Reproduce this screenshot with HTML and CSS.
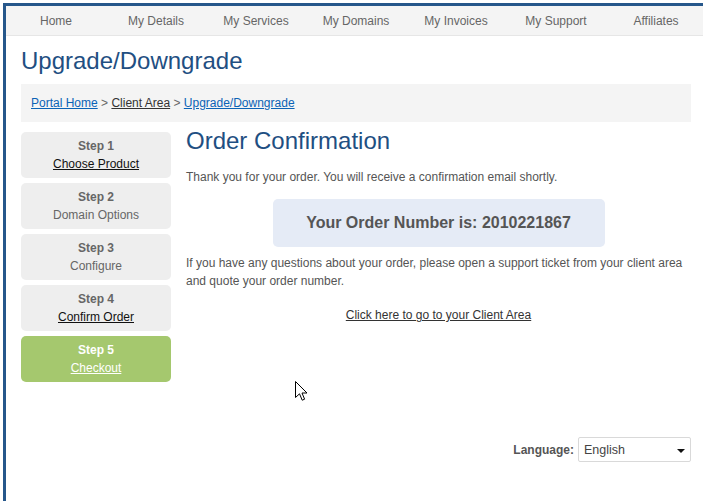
FILE: index.html
```html
<!DOCTYPE html>
<html lang="en">
<head>
<meta charset="utf-8">
<title>Upgrade/Downgrade</title>
<link rel="stylesheet" href="styles.css">
</head>
<body>
<div class="page">
  <nav class="nav">
    <a class="nav-item">Home</a>
    <a class="nav-item">My Details</a>
    <a class="nav-item">My Services</a>
    <a class="nav-item">My Domains</a>
    <a class="nav-item">My Invoices</a>
    <a class="nav-item">My Support</a>
    <a class="nav-item">Affiliates</a>
  </nav>
  <div class="content">
    <h1 class="title">Upgrade/Downgrade</h1>
    <div class="breadcrumb">
      <a class="crumb-link" href="#">Portal Home</a> <span class="sep">&gt;</span> <a class="crumb-visited" href="#">Client Area</a> <span class="sep">&gt;</span> <a class="crumb-link" href="#">Upgrade/Downgrade</a>
    </div>
    <div class="row">
      <aside class="steps">
        <div class="step"><div class="step-num">Step 1</div><a class="step-link" href="#">Choose Product</a></div>
        <div class="step"><div class="step-num">Step 2</div><div class="step-text">Domain Options</div></div>
        <div class="step"><div class="step-num">Step 3</div><div class="step-text">Configure</div></div>
        <div class="step"><div class="step-num">Step 4</div><a class="step-link" href="#">Confirm Order</a></div>
        <div class="step step-active"><div class="step-num">Step 5</div><a class="step-link" href="#">Checkout</a></div>
      </aside>
      <main class="main">
        <h2 class="heading">Order Confirmation</h2>
        <p class="text first">Thank you for your order. You will receive a confirmation email shortly.</p>
        <div class="order-box">Your Order Number is: 2010221867</div>
        <p class="text after-box">If you have any questions about your order, please open a support ticket from your client area and quote your order number.</p>
        <p class="center"><a class="client-link" href="#">Click here to go to your Client Area</a></p>
      </main>
    </div>
    <div class="lang-row">
      <span class="lang-label">Language:</span>
      <div class="select"><span>English</span><span class="caret"></span></div>
    </div>
  </div>
  <svg class="cursor" width="13" height="20" viewBox="0 0 13 20"><path d="M0.5 0.5 L0.5 16.5 L4.5 12.8 L7.2 19.2 L9.6 18.2 L7 12 L12 12 Z" fill="#fff" stroke="#000" stroke-width="1" stroke-linejoin="miter"/></svg>
</div>
</body>
</html>
```

FILE: styles.css
```css
html, body {
  margin: 0;
  padding: 0;
  overflow: hidden;
  background: #fff;
}
body {
  padding: 3px 0 0 3px;
  font-family: "Liberation Sans", Arial, sans-serif;
  font-size: 12px;
  color: #555;
}
.page {
  position: relative;
  width: 700px;
  min-height: 498px;
  border-top: 3px solid #26578b;
  border-left: 3px solid #26578b;
}
.nav {
  display: grid;
  grid-template-columns: repeat(7, 100px);
  height: 29px;
  background: #f4f4f4;
  border-bottom: 1px solid #e6e6e6;
}
.nav-item {
  display: flex;
  align-items: center;
  justify-content: center;
  color: #666;
  font-size: 12px;
  padding-top: 1px;
}
.content {
  padding: 0 15px;
}
.title {
  margin: 11px 0 9px;
  font-size: 24px;
  line-height: 28px;
  font-weight: normal;
  color: #1f4f82;
}
.breadcrumb {
  background: #f4f4f4;
  padding: 10px 10px;
  line-height: 18px;
  font-size: 12px;
}
.crumb-link { color: #0b63b6; text-decoration: underline; }
.crumb-visited { color: #333; text-decoration: underline; }
.sep { color: #666; }
.row {
  display: flex;
  gap: 15px;
  margin-top: 5px;
}
.steps {
  width: 150px;
  flex: none;
  display: flex;
  flex-direction: column;
  gap: 5px;
  padding-top: 5px;
}
.step {
  height: 46px;
  box-sizing: border-box;
  padding: 5px 0;
  background: #eeeeee;
  border-radius: 5px;
  text-align: center;
  line-height: 18px;
  font-size: 12px;
  color: #666;
}
.step-num { font-weight: bold; color: #666; }
.step-link { color: #111; text-decoration: underline; }
.step-text { color: #666; }
.step-active { background: #a5c86e; }
.step-active .step-num, .step-active .step-link { color: #fff; }
.main {
  flex: 1;
  min-width: 0;
}
.heading {
  margin: 0;
  font-size: 24px;
  line-height: 28px;
  font-weight: normal;
  color: #1f4f82;
}
.text {
  margin: 0;
  line-height: 18px;
  color: #555;
}
.text.first { margin-top: 13px; }
.order-box {
  width: 332px;
  margin: 13px auto 0;
  padding: 15px 0;
  background: #e5ebf6;
  border-radius: 5px;
  text-align: center;
  font-size: 16px;
  line-height: 18px;
  font-weight: bold;
  color: #555;
}
.text.after-box { margin-top: 7px; }
.center {
  margin: 16px 0 0;
  text-align: center;
  line-height: 18px;
}
.client-link { color: #333; text-decoration: underline; }
.lang-row {
  display: flex;
  justify-content: flex-end;
  align-items: center;
  gap: 4px;
  margin-top: 55px;
}
.lang-label {
  font-weight: bold;
  color: #555;
  font-size: 12px;
}
.select {
  width: 113px;
  height: 25px;
  box-sizing: border-box;
  border: 1px solid #d9d9d9;
  border-radius: 2px;
  display: flex;
  align-items: center;
  justify-content: space-between;
  padding: 0 5px 0 5px;
  font-size: 12.5px;
  color: #444;
}
.caret {
  width: 0;
  height: 0;
  border-left: 4px solid transparent;
  border-right: 4px solid transparent;
  border-top: 4px solid #111;
  margin-top: 2px;
}
.cursor {
  position: absolute;
  left: 289px;
  top: 375px;
}
```
